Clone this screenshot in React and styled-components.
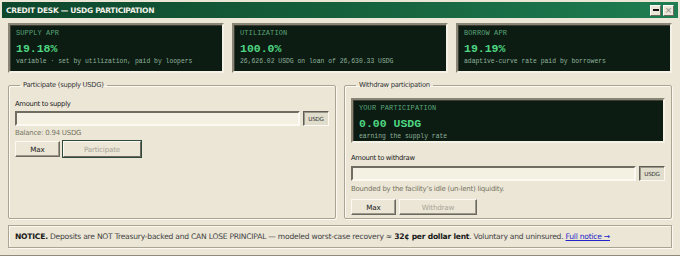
import React from "react";
import styled, { createGlobalStyle } from "styled-components";

const GlobalStyle = createGlobalStyle`
  html, body {
    margin: 0;
    padding: 0;
    background: #ebe6d6;
  }
  * {
    box-sizing: border-box;
  }
`;

const stats = [
  {
    label: "SUPPLY APR",
    value: "19.18%",
    note: "variable · set by utilization, paid by loopers",
  },
  {
    label: "UTILIZATION",
    value: "100.0%",
    note: "26,626.02 USDG on loan of 26,630.33 USDG",
  },
  {
    label: "BORROW APR",
    value: "19.19%",
    note: "adaptive-curve rate paid by borrowers",
  },
];

const App = () => {
  return (
    <>
      <GlobalStyle />
      <Window>
        <TitleBar>
          <Title>CREDIT DESK — USDG PARTICIPATION</Title>
          <Controls>
            <CtrlButton aria-label="minimize">
              <MinGlyph />
            </CtrlButton>
            <CtrlButton aria-label="close">
              <CloseGlyph>×</CloseGlyph>
            </CtrlButton>
          </Controls>
        </TitleBar>
        <Body>
          <StatRow>
            {stats.map((s) => (
              <Readout key={s.label}>
                <ReadLabel>{s.label}</ReadLabel>
                <ReadValue>{s.value}</ReadValue>
                <ReadNote>{s.note}</ReadNote>
              </Readout>
            ))}
          </StatRow>

          <Panels>
            <Group>
              <Legend>Participate (supply USDG)</Legend>
              <FieldLabel $mt={1}>Amount to supply</FieldLabel>
              <InputRow $mt={2}>
                <TextInput />
                <Unit>USDG</Unit>
              </InputRow>
              <Hint $mt={2}>Balance: 0.94 USDG</Hint>
              <ButtonRow $mt={3}>
                <Button $w={45}>Max</Button>
                <Button $w={78} $default disabled>
                  Participate
                </Button>
              </ButtonRow>
            </Group>

            <Group>
              <Legend>Withdraw participation</Legend>
              <Readout $inner>
                <ReadLabel>YOUR PARTICIPATION</ReadLabel>
                <ReadValue>0.00 USDG</ReadValue>
                <ReadNote>earning the supply rate</ReadNote>
              </Readout>
              <FieldLabel $mt={10}>Amount to withdraw</FieldLabel>
              <InputRow $mt={3}>
                <TextInput />
                <Unit>USDG</Unit>
              </InputRow>
              <Hint $mt={3}>Bounded by the facility’s idle (un-lent) liquidity.</Hint>
              <ButtonRow $mt={5}>
                <Button $w={45}>Max</Button>
                <Button $w={78} disabled>
                  Withdraw
                </Button>
              </ButtonRow>
            </Group>
          </Panels>

          <Notice>
            <b>NOTICE.</b> Deposits are NOT Treasury-backed and CAN LOSE
            PRINCIPAL — modeled worst-case recovery ≈ <b>32¢ per dollar lent</b>
            . Voluntary and uninsured. <NoticeLink href="#">Full notice →</NoticeLink>
          </Notice>
        </Body>
      </Window>
    </>
  );
};

export default App;

const sans = `"DejaVu Sans", Verdana, sans-serif`;
const mono = `"Liberation Mono", "Courier New", monospace`;

const Window = styled.div`
  width: 680px;
  height: 256px;
  padding: 2px;
  background: #ebe6d6;
  border-bottom: 1px solid #8d8a7c;
  display: flex;
  flex-direction: column;
  font-family: ${sans};
  color: #222;
`;

const TitleBar = styled.div`
  height: 16px;
  flex: none;
  display: flex;
  align-items: center;
  justify-content: space-between;
  padding: 0 4px;
  background: linear-gradient(90deg, #0d472c 0%, #15603c 50%, #1f7d52 100%);
`;

const Title = styled.div`
  font-size: 7.5px;
  font-weight: bold;
  color: #f2f2ea;
  letter-spacing: -0.3px;
`;

const Controls = styled.div`
  display: flex;
  gap: 2px;
`;

const CtrlButton = styled.div`
  width: 11px;
  height: 11px;
  background: #ebe6d6;
  border: 1px solid;
  border-color: #fff #6c6a60 #6c6a60 #fff;
  display: flex;
  align-items: center;
  justify-content: center;
`;

const MinGlyph = styled.span`
  width: 6px;
  height: 2px;
  background: #111;
`;

const CloseGlyph = styled.span`
  font-size: 9px;
  line-height: 1;
  color: #888;
`;

const Body = styled.div`
  flex: 1;
  display: flex;
  flex-direction: column;
  padding: 5px 6px 5px;
`;

const StatRow = styled.div`
  display: grid;
  grid-template-columns: repeat(3, 1fr);
  gap: 8px;
`;

const Readout = styled.div`
  height: ${(p) => (p.$inner ? 45 : 50)}px;
  flex: none;
  background: #0c1c12;
  border: 2px solid;
  border-color: #8a8676 #f4f1e6 #f4f1e6 #8a8676;
  box-shadow: inset 1px 1px 0 #3c3c34;
  padding: 4px 6px 0;
  display: flex;
  flex-direction: column;
  font-family: ${mono};
`;

const ReadLabel = styled.div`
  font-size: 7px;
  line-height: 9px;
  color: #5aa47a;
  letter-spacing: 0.1px;
`;

const ReadValue = styled.div`
  font-size: 11.5px;
  line-height: 15px;
  font-weight: bold;
  color: #4fd682;
  margin-top: 3px;
`;

const ReadNote = styled.div`
  font-size: 6.4px;
  line-height: 9px;
  margin-top: 1px;
  color: #8fb09c;
  white-space: nowrap;
`;

const Panels = styled.div`
  flex: 1;
  display: grid;
  grid-template-columns: 1fr 1fr;
  gap: 8px;
  margin-top: 7px;
`;

const Group = styled.fieldset`
  margin: 0;
  padding: 8px 6px 0;
  border: 1px solid #aaa592;
  box-shadow: inset 1px 1px 0 #fbf9f1, 1px 1px 0 #fbf9f1;
  border-radius: 2px;
  min-width: 0;
  display: flex;
  flex-direction: column;
`;

const Legend = styled.legend`
  font-size: 6.8px;
  line-height: 10px;
  letter-spacing: -0.3px;
  padding: 0 3px;
  margin-left: 5px;
  color: #333;
`;

const FieldLabel = styled.div`
  font-size: 6.8px;
  line-height: 10px;
  letter-spacing: -0.3px;
  margin-top: ${(p) => p.$mt}px;
  color: #222;
`;

const InputRow = styled.div`
  display: flex;
  gap: 3px;
  margin-top: ${(p) => p.$mt}px;
`;

const TextInput = styled.div`
  flex: 1;
  height: 15px;
  background: #f4f1e3;
  border: 2px solid;
  border-color: #6f6d62 #fbf9f2 #fbf9f2 #6f6d62;
`;

const Unit = styled.div`
  width: 26px;
  height: 15px;
  background: #e1ddcc;
  border: 1px solid;
  border-color: #5f5d54 #fbf9f2 #fbf9f2 #5f5d54;
  box-shadow: inset 1px 1px 0 #9a968a;
  font-size: 5.6px;
  letter-spacing: -0.2px;
  display: flex;
  align-items: center;
  justify-content: center;
  color: #333;
`;

const Hint = styled.div`
  font-size: 7px;
  line-height: 10px;
  letter-spacing: -0.25px;
  margin-top: ${(p) => p.$mt}px;
  color: #777463;
`;

const ButtonRow = styled.div`
  display: flex;
  gap: 3px;
  margin-top: ${(p) => p.$mt}px;
`;

const Button = styled.button`
  width: ${(p) => p.$w}px;
  height: 16px;
  padding: 0;
  font-family: ${sans};
  font-size: 7.2px;
  letter-spacing: -0.2px;
  color: #222;
  background: #ebe6d6;
  border: 1px solid;
  border-color: #fbf9f2 #6b695f #6b695f #fbf9f2;
  box-shadow: ${(p) =>
    p.$default ? "0 0 0 1px #2e4a3a" : "inset -1px -1px 0 #9c988a"};

  &:disabled {
    color: #a8a596;
  }
`;

const Notice = styled.div`
  margin-top: 6px;
  height: 23px;
  flex: none;
  display: flex;
  align-items: center;
  padding: 0 6px;
  border: 1px solid #aaa592;
  box-shadow: inset 1px 1px 0 #fbf9f1, 1px 1px 0 #fbf9f1;
  font-size: 7.6px;
  letter-spacing: -0.24px;
  color: #444;
  white-space: pre;

  b {
    color: #1a1a1a;
  }
`;

const NoticeLink = styled.a`
  color: #2424c8;
  text-decoration: underline;
`;
